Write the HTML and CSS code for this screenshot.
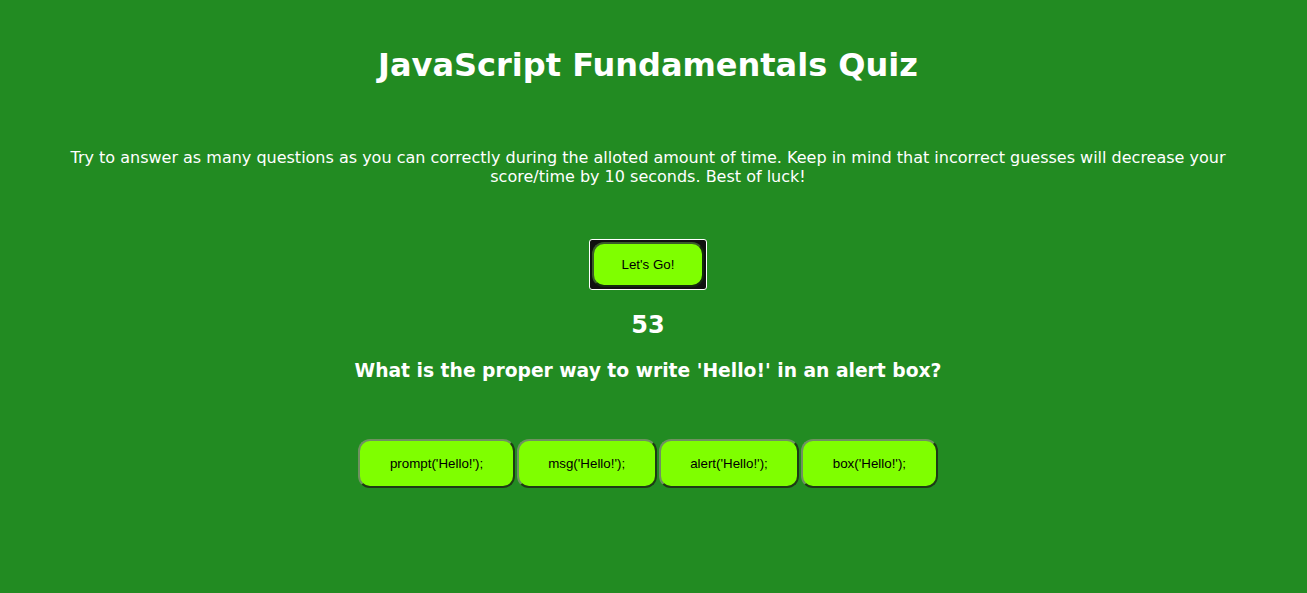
FILE: index.html
```html
<!DOCTYPE html>
<html>
<head>
<meta charset="utf-8">
<title>JavaScript Fundamentals Quiz</title>
<link rel="stylesheet" href="styles.css">
</head>
<body>
<main class="quiz">
  <h1 class="title">JavaScript Fundamentals Quiz</h1>
  <p class="intro">Try to answer as many questions as you can correctly during the alloted amount of time. Keep in mind that incorrect guesses will decrease your score/time by 10 seconds. Best of luck!</p>
  <div class="start-row">
    <span class="focus-ring"><button class="btn start-btn">Let's Go!</button></span>
  </div>
  <h2 class="timer">53</h2>
  <h3 class="question">What is the proper way to write 'Hello!' in an alert box?</h3>
  <div class="answers">
    <button class="btn answer-btn">prompt('Hello!');</button>
    <button class="btn answer-btn">msg('Hello!');</button>
    <button class="btn answer-btn">alert('Hello!');</button>
    <button class="btn answer-btn">box('Hello!');</button>
  </div>
</main>
</body>
</html>
```

FILE: styles.css
```css
html, body {
  margin: 0;
  padding: 0;
}

body {
  background: #228b22;
  color: #ffffff;
  font-family: Verdana, "DejaVu Sans", sans-serif;
}

.quiz {
  display: flex;
  flex-direction: column;
  align-items: center;
  padding: 46px 71px 0 60px;
  text-align: center;
}

.title {
  margin: 0;
  font-size: 32px;
  font-weight: bold;
  line-height: 38px;
}

.intro {
  margin: 64px 0 0;
  font-size: 16px;
  line-height: 19px;
}

.start-row {
  margin-top: 53px;
  display: flex;
  justify-content: center;
}

.focus-ring {
  display: inline-flex;
  padding: 2px;
  background: #101010;
  border: 1px solid #ffffff;
  border-radius: 3px;
}

.btn {
  font-family: "Liberation Sans", Arial, sans-serif;
  font-size: 13.33px;
  color: #000000;
  background: #7fff00;
  border: 2px solid;
  border-color: #6f9160 #1d3a15 #1d3a15 #6f9160;
  border-radius: 12px;
  cursor: pointer;
}

.start-btn {
  padding: 13px 27.5px;
  border-color: #3a5a2a #142a0e #142a0e #3a5a2a;
}

.timer {
  margin: 21px 0 0;
  font-size: 24px;
  line-height: 28px;
}

.question {
  margin: 21px 0 0;
  font-size: 18.72px;
  line-height: 22px;
}

.answers {
  margin-top: 57px;
  display: flex;
  gap: 2px;
}

.answer-btn {
  padding: 15px 29.5px;
}
```
